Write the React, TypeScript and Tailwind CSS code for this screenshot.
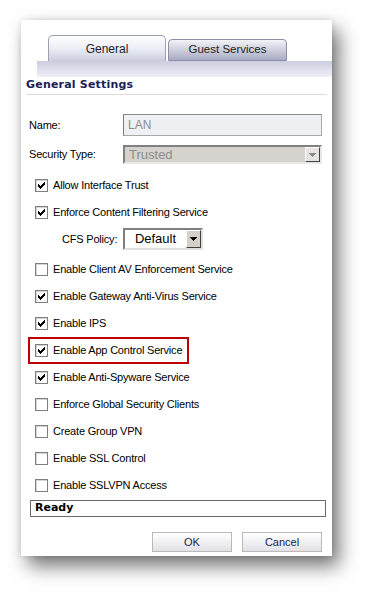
import React from "react";

const ui = { fontFamily: '"Liberation Sans", Arial, sans-serif' };
const bold = { fontFamily: '"DejaVu Sans", Verdana, sans-serif' };

function Box({ on }: { on: boolean }) {
  return (
    <svg width="13" height="13" viewBox="0 0 13 13" shapeRendering="crispEdges" className="shrink-0">
      <rect x="0" y="0" width="13" height="13" fill="#7f7f7f" />
      <rect x="1" y="1" width="11" height="11" fill="#d4d4d4" />
      <rect x="2" y="2" width="10" height="10" fill="#ffffff" />
      {on && (
        <path
          d="M9 3h1v1H9z M8 4h2v1H8z M3 5h1v1H3z M7 5h3v1H7z M3 6h2v1H3z M6 6h3v1H6z M3 7h5v1H3z M4 8h3v1H4z M5 9h1v1H5z"
          fill="#000"
        />
      )}
    </svg>
  );
}

function Arrow({ disabled }: { disabled?: boolean }) {
  return (
    <div
      className={
        "w-[15px] h-full flex items-center justify-center border border-t-white border-l-white border-r-[#404040] border-b-[#404040] " +
        (disabled ? "bg-[#e6e4e0]" : "bg-[#d4d0c8]")
      }
    >
      <svg width="7" height="4" viewBox="0 0 7 4" shapeRendering="crispEdges">
        <path d="M0 0h7L3.5 4z" fill={disabled ? "#8a8a8a" : "#000"} />
      </svg>
    </div>
  );
}

function Row({ on, label }: { on: boolean; label: string }) {
  return (
    <div className="h-[27px] flex items-center gap-[5px] pl-[14px]">
      <Box on={on} />
      <span className="text-[11px] text-black tracking-[-0.2px]">{label}</span>
    </div>
  );
}

export default function App() {
  const rows: [boolean, string][] = [
    [false, "Enable Client AV Enforcement Service"],
    [true, "Enable Gateway Anti-Virus Service"],
    [true, "Enable IPS"],
  ];
  const rest: [boolean, string][] = [
    [true, "Enable Anti-Spyware Service"],
    [false, "Enforce Global Security Clients"],
    [false, "Create Group VPN"],
    [false, "Enable SSL Control"],
    [false, "Enable SSLVPN Access"],
  ];

  return (
    <div className="w-[374px] h-[598px] bg-white overflow-hidden pt-[20px] pl-[21px]" style={ui}>
      <div className="w-[311px] h-[536px] bg-white flex flex-col shadow-[7px_10px_18px_rgba(0,0,0,0.55),0_0_6px_rgba(0,0,0,0.12)]">
        {/* tabs */}
        <div className="pt-[15px] pl-[27px] flex items-end gap-[2px]">
          <div className="w-[118px] h-[26px] rounded-t-[5px] border border-b-0 border-[#9d9fb2] bg-gradient-to-b from-white via-[#eceef5] to-[#cbcddf] flex items-center justify-center text-[12px] text-[#222]">
            General
          </div>
          <div className="w-[119px] h-[22px] rounded-t-[4px] border border-[#8d8fa6] bg-gradient-to-b from-[#f3f3f8] to-[#a9abc3] flex items-center justify-center text-[11.5px] text-[#222]">
            Guest Services
          </div>
        </div>
        <div className="ml-[16px] h-[16px] bg-gradient-to-b from-[#cbcddf] to-[#eff0f6]" />

        {/* heading */}
        <div className="mx-[5px] h-[18px] border-b border-[#dcdcdc] flex items-center">
          <span className="text-[11px] font-bold text-[#1c1c58] tracking-[0.2px]" style={bold}>
            General Settings
          </span>
        </div>

        {/* name */}
        <div className="mt-[19px] pl-[8px] flex items-center h-[22px]">
          <span className="w-[94px] text-[11px] tracking-[-0.2px]">Name:</span>
          <div className="w-[199px] h-[22px] border border-[#a7a7a7] border-l-[#7a7a7a] border-t-[#8a8a8a] bg-[#eff0f4] flex items-center pl-[4px] text-[12px] text-[#8c8c8c]">
            LAN
          </div>
        </div>

        {/* security type */}
        <div className="mt-[9px] pl-[8px] flex items-center h-[19px]">
          <span className="w-[94px] text-[11px] tracking-[-0.2px]">Security Type:</span>
          <div className="w-[199px] h-[19px] border-2 border-t-[#808080] border-l-[#808080] border-r-[#e8e8e8] border-b-[#e8e8e8] bg-[#d6d3ce] flex items-center">
            <span className="flex-1 pl-[4px] text-[13px] text-[#8c8c8c]">Trusted</span>
            <Arrow disabled />
          </div>
        </div>

        <div className="mt-[8px]">
          <Row on label="Allow Interface Trust" />
          <Row on label="Enforce Content Filtering Service" />
          <div className="h-[26px] flex items-center pl-[41px]">
            <span className="w-[61px] text-[11px] tracking-[-0.2px]">CFS Policy:</span>
            <div className="w-[80px] h-[22px] border-2 border-t-[#808080] border-l-[#808080] border-r-[#e0e0e0] border-b-[#e0e0e0] bg-white flex items-center">
              <span className="flex-1 text-center text-[13px] text-black">Default</span>
              <Arrow />
            </div>
          </div>
        </div>

        <div className="mt-[4px]">
          {rows.map(([on, l]) => (
            <Row key={l} on={on} label={l} />
          ))}
          <div className="ml-[7px] w-[161px] h-[27px] border-2 border-[#c00000] flex items-center gap-[5px] pl-[5px]">
            <Box on />
            <span className="text-[11px] text-black tracking-[-0.2px]">Enable App Control Service</span>
          </div>
          {rest.map(([on, l]) => (
            <Row key={l} on={on} label={l} />
          ))}
        </div>

        {/* status */}
        <div className="mt-[1px] ml-[9px] w-[296px] h-[17px] border border-[#6a6a6a] flex items-center pl-[4px]">
          <span className="text-[11px] font-bold text-black" style={bold}>
            Ready
          </span>
        </div>

        {/* buttons */}
        <div className="mt-[15px] flex justify-end gap-[10px] pr-[10px]">
          <div className="w-[80px] h-[20px] border border-[#b9b9b9] bg-gradient-to-b from-white to-[#e2e2e6] flex items-center justify-center text-[11px] text-[#1c1c50]">
            OK
          </div>
          <div className="w-[80px] h-[20px] border border-[#b9b9b9] bg-gradient-to-b from-white to-[#e2e2e6] flex items-center justify-center text-[11px] text-[#1c1c50]">
            Cancel
          </div>
        </div>
      </div>
    </div>
  );
}
